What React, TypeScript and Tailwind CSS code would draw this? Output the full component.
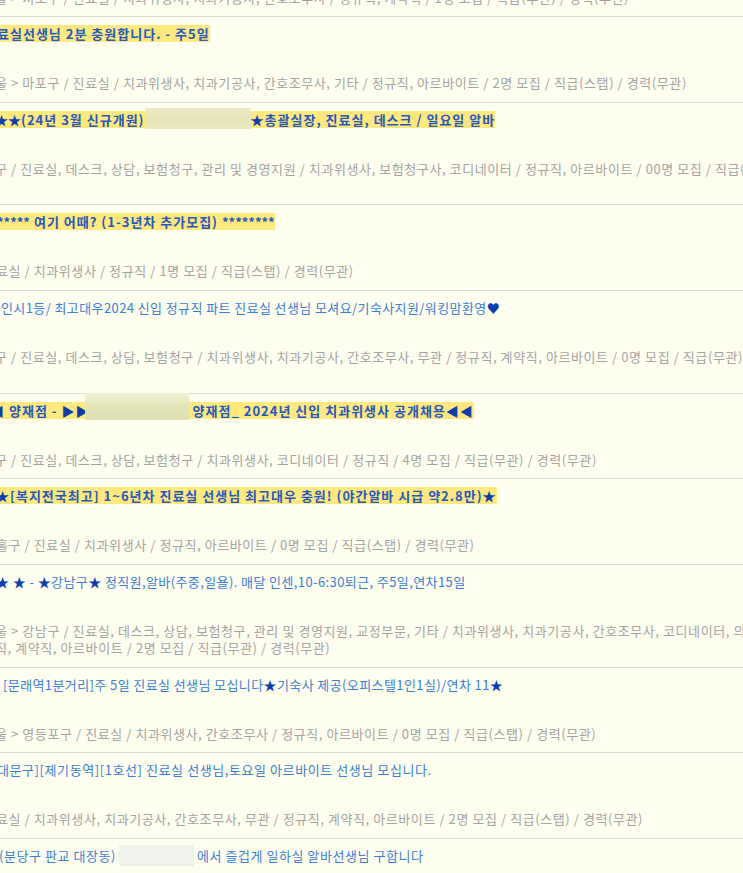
import React from "react";

type Seg =
  | { t: string; s?: boolean; n?: boolean }
  | { blur: "a" | "b" | "c" };

type Row = {
  hl: boolean;
  tml: string;
  tr?: string;
  segs: Seg[];
  details: { ml: string; t: string }[];
};

const rows: Row[] = [
  {
    hl: true,
    tml: "-ml-[3px]",
    segs: [{ t: "료실선생님 2분 충원합니다. - 주5일" }],
    details: [
      { ml: "-ml-[5px]", t: "울 > 마포구 / 진료실 / 치과위생사, 치과기공사, 간호조무사, 기타 / 정규직, 아르바이트 / 2명 모집 / 직급(스탭) / 경력(무관)" },
    ],
  },
  {
    hl: true,
    tml: "-ml-[5px]",
    segs: [
      { t: "★", s: true, n: true },
      { t: "★", s: true, n: true },
      { t: "(24년 3월 신규개원)" },
      { blur: "a" },
      { t: "★", s: true },
      { t: "총괄실장, 진료실, 데스크 / 일요일 알바" },
    ],
    details: [
      { ml: "-ml-[5px]", t: "구 / 진료실, 데스크, 상담, 보험청구, 관리 및 경영지원 / 치과위생사, 보험청구사, 코디네이터 / 정규직, 아르바이트 / 00명 모집 / 직급(스탭) / 경력(무관)" },
      { ml: "-ml-[400px]", t: "" },
    ],
  },
  {
    hl: true,
    tml: "-ml-[3px]",
    segs: [
      { t: "*****", n: true },
      { t: " 여기 어때? (1-3년차 추가모집) " },
      { t: "********", n: true },
    ],
    details: [
      { ml: "-ml-[4px]", t: "료실 / 치과위생사 / 정규직 / 1명 모집 / 직급(스탭) / 경력(무관)" },
    ],
  },
  {
    hl: false,
    tml: "ml-[1px]",
    segs: [
      { t: "인시1등/ 최고대우2024 신입 정규직 파트 진료실 선생님 모셔요/기숙사지원/워킹맘환영" },
      { t: "♥", s: true },
    ],
    details: [
      { ml: "-ml-[5px]", t: "구 / 진료실, 데스크, 상담, 보험청구 / 치과위생사, 치과기공사, 간호조무사, 무관 / 정규직, 계약직, 아르바이트 / 0명 모집 / 직급(무관) / 경력(무관)" },
      { ml: "-ml-[400px]", t: "" },
    ],
  },
  {
    hl: true,
    tml: "-ml-[9px]",
    segs: [
      { t: "◀", s: true },
      { t: " 양재점 - " },
      { t: "▶", s: true },
      { t: "▶", s: true },
      { blur: "b" },
      { t: " 양재점_ 2024년 신입 치과위생사 공개채용" },
      { t: "◀◀", s: true },
    ],
    details: [
      { ml: "-ml-[5px]", t: "구 / 진료실, 데스크, 상담, 보험청구 / 치과위생사, 코디네이터 / 정규직 / 4명 모집 / 직급(무관) / 경력(무관)" },
    ],
  },
  {
    hl: true,
    tml: "-ml-[4px]",
    segs: [
      { t: "★", s: true },
      { t: "[복지전국최고] 1~6년차 진료실 선생님 최고대우 충원! (야간알바 시급 약2.8만)" },
      { t: "★", s: true },
    ],
    details: [
      { ml: "-ml-[4px]", t: "홀구 / 진료실 / 치과위생사 / 정규직, 아르바이트 / 0명 모집 / 직급(스탭) / 경력(무관)" },
    ],
  },
  {
    hl: false,
    tml: "-ml-[4px]",
    segs: [
      { t: "★", s: true },
      { t: " " },
      { t: "★", s: true },
      { t: " - " },
      { t: "★", s: true },
      { t: "강남구" },
      { t: "★", s: true },
      { t: " 정직원,알바(주중,일욜). 매달 인센,10-6:30퇴근, 주5일,연차15일" },
    ],
    details: [
      { ml: "-ml-[5px]", t: "울 > 강남구 / 진료실, 데스크, 상담, 보험청구, 관리 및 경영지원, 교정부문, 기타 / 치과위생사, 치과기공사, 간호조무사, 코디네이터, 의료" },
      { ml: "-ml-[5px]", t: "직, 계약직, 아르바이트 / 2명 모집 / 직급(무관) / 경력(무관)" },
    ],
  },
  {
    hl: false,
    tml: "ml-[3px]",
    segs: [
      { t: "[문래역1분거리]주 5일 진료실 선생님 모십니다" },
      { t: "★", s: true },
      { t: "기숙사 제공(오피스텔1인1실)/연차 11" },
      { t: "★", s: true },
    ],
    details: [
      { ml: "-ml-[5px]", t: "울 > 영등포구 / 진료실 / 치과위생사, 간호조무사 / 정규직, 아르바이트 / 0명 모집 / 직급(스탭) / 경력(무관)" },
    ],
  },
  {
    hl: false,
    tml: "-ml-[3px]",
    tr: "tracking-[0.58px]",
    segs: [{ t: "대문구][제기동역][1호선] 진료실 선생님,토요일 아르바이트 선생님 모십니다." }],
    details: [
      { ml: "-ml-[4px]", t: "료실 / 치과위생사, 치과기공사, 간호조무사, 무관 / 정규직, 계약직, 아르바이트 / 2명 모집 / 직급(스탭) / 경력(무관)" },
    ],
  },
  {
    hl: false,
    tml: "-ml-[1px]",
    tr: "tracking-[0.55px]",
    segs: [
      { t: "(분당구 판교 대장동)" },
      { blur: "c" },
      { t: "에서 즐겁게 일하실 알바선생님 구합니다" },
    ],
    details: [],
  },
];

function Blur({ kind }: { kind: "a" | "b" | "c" }) {
  if (kind === "a")
    return (
      <span className="inline-block align-top h-[21px] w-[106px] -mt-[3px] bg-gradient-to-b from-[#ecebc4] via-[#e5e4b6] to-[#e9e8bf]" />
    );
  if (kind === "b")
    return (
      <span className="inline-block align-top h-[27px] w-[104px] -mt-[9px] -ml-[5px] bg-gradient-to-b from-[#f3f3d6] via-[#e2e4b6] to-[#dcdfae]" />
    );
  return (
    <span className="inline-block align-top h-[21px] w-[75px] -mt-[2px] mx-[3px] bg-[#eef2ea]" />
  );
}

function Title({ row }: { row: Row }) {
  const content = row.segs.map((sg, i) => {
    if ("blur" in sg) return <Blur key={i} kind={sg.blur} />;
    const cls = [sg.s ? "text-[#0b3cb2]" : "", sg.n ? "tracking-[0px]" : ""].join(" ");
    return (
      <span key={i} className={cls}>
        {sg.t}
      </span>
    );
  });
  return (
    <div className={`h-[17px] leading-[17px] whitespace-nowrap ${row.tml}`}>
      {row.hl ? (
        <span className="inline-block align-top h-[17px] leading-[17px] bg-[#fde97c] font-bold text-[#2456c4] tracking-[1px]">
          {content}
        </span>
      ) : (
        <span className={`text-[#3b7dd6] ${row.tr ?? "tracking-[0.4px]"}`}>{content}</span>
      )}
    </div>
  );
}

export default function App() {
  return (
    <div className="w-[743px] h-[873px] overflow-hidden bg-[#fffff0] font-['Noto_Sans_CJK_KR',sans-serif] text-[13px]">
      <div className="h-[17px] border-b border-[#dcdcd4] overflow-hidden">
        <div className="-mt-[11px] -ml-[5px] h-[17px] leading-[17px] whitespace-nowrap text-[#a3a3a3] tracking-[0.58px]">
          울 &gt; 서초구 / 진료실 / 치과위생사, 치과기공사, 간호조무사 / 정규직, 계약직 / 1명 모집 / 직급(무관) / 경력(무관)
        </div>
      </div>
      {rows.map((row, i) => (
        <div key={i} className="border-b border-[#dcdcd4] pt-[8px] pb-[10.66px]">
          <Title row={row} />
          <div className="mt-[32px]">
            {row.details.map((d, j) => (
              <div
                key={j}
                className={`h-[17px] leading-[17px] whitespace-nowrap text-[#a3a3a3] tracking-[0.58px] ${d.ml}`}
              >
                {d.t}
              </div>
            ))}
          </div>
        </div>
      ))}
    </div>
  );
}
